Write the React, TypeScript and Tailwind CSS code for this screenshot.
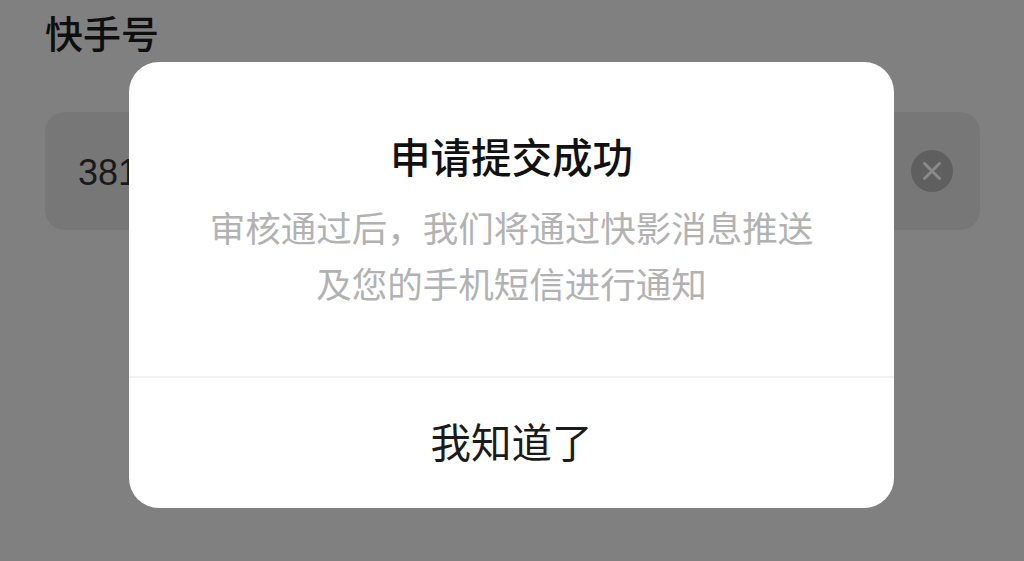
const cjk = "font-['Noto_Sans_CJK_SC',sans-serif]";

export default function App() {
  return (
    <div className={`relative h-[561px] w-[1024px] overflow-hidden bg-[#808080] ${cjk}`}>
      {/* page behind the dialog */}
      <div className="pl-[45px] pt-[8px]">
        <div className="text-[38px] font-medium leading-[48px] text-[#0e0e0e]">快手号</div>
        <div className="mt-[56px] flex h-[118px] w-[935px] items-center justify-between rounded-[20px] bg-[#777777] pl-[33px] pr-[27px]">
          <span className="pt-[3px] font-['Liberation_Sans',sans-serif] text-[36px] text-[#1a1a1a]">381</span>
          <span className="flex h-[42px] w-[42px] items-center justify-center rounded-full bg-[#5f5f5f]">
            <svg width="20" height="20" viewBox="0 0 20 20" fill="none" stroke="#8a8a8a" strokeWidth="3" strokeLinecap="round">
              <path d="M2.5 2.5l15 15M17.5 2.5l-15 15" />
            </svg>
          </span>
        </div>
      </div>

      {/* dialog */}
      <div className="absolute left-[129px] top-[62px] flex h-[446px] w-[765px] flex-col rounded-[30px] bg-white">
        <div className="flex h-[316px] flex-col items-center border-b-2 border-[#f2f2f2] pt-[69px]">
          <div className="text-[40.5px] font-medium leading-[50px] text-[#111111]">申请提交成功</div>
          <div className="mt-[18px] text-center text-[35.5px] leading-[56px] text-[#b2b2b2]">
            <div>审核通过后，我们将通过快影消息推送</div>
            <div>及您的手机短信进行通知</div>
          </div>
        </div>
        <div className="flex flex-1 items-center justify-center pb-[4px] text-[40.5px] leading-none text-[#1a1a1a]">我知道了</div>
      </div>
    </div>
  );
}
